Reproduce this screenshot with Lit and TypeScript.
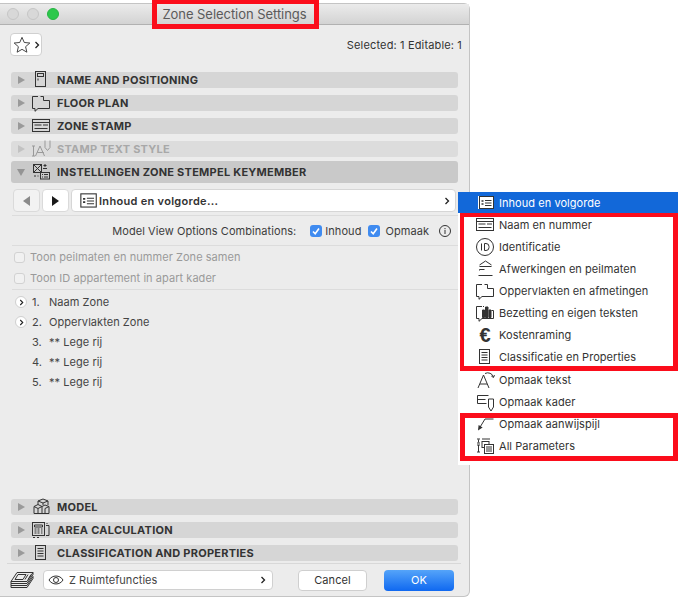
import { LitElement, html, css, svg } from "lit";
import { customElement } from "lit/decorators.js";

const ic: Record<string, any> = {
  door: svg`<rect x="4.500" y="1.500" width="10" height="15"/><rect x="6.500" y="3.500" width="6" height="3"/><path d="M7 8.500v2"/>`,
  floor: svg`<path d="M7 3.500H1.500v12H4v2.800l3-2.800h11.500v-8h-6v-4h-3"/>`,
  stamp: svg`<rect x="1.500" y="3.500" width="17" height="12"/><path d="M1.500 6.500h17M3.500 9h7M12 9h5M3.500 12.500h13"/>`,
  tstyle: svg`<path d="M4.500 17l4.500-10 4.500 10M6.200 13.500h6.600M2.500 7v10M1 7h3M1 17h3M14 1.500v7l2.500 3 2.500-3v-7"/>`,
  key: svg`<rect x="2.500" y="2.500" width="8" height="8"/><path d="M2.500 2.500l8 8M10.500 2.500l-8 8M14 2v3M12.500 3.500h3M12 6.500h4"/><rect x="9.500" y="10.500" width="9" height="6.500"/><path d="M13 12.500h4M13 15h4M11 12.500h1M11 15h1M3 14h2M6.500 14h1"/>`,
  model: svg`<path d="M3 9.500l4-2 4 2v7H3zM3 9.500l4 2 4-2M7 11.500v5M7 7.500V4l5-2 5 2v4M7 4l5 2 5-2M12 6v2M11 9.500l3-1.500 4 1.500v7h-7M14 11.500l4-2M14 11.500v5"/>`,
  area: svg`<rect x="1.500" y="2.500" width="12" height="13"/><path d="M3.500 5h8v2h-8zM3.500 9h2M6.500 9h2M10 9h1.500M3.500 11h2M6.500 11h2M10 11h1.500M3.500 13h2M6.500 13h2M10 13h1.500M15 5.500h3v10h-3M2 17.500h2M6 17.500h2M16 3v1"/>`,
  doc: svg`<rect x="4.500" y="2.500" width="10" height="14"/><path d="M6.500 5.500h6M6.500 8h6M6.500 10.500h6M6.500 13h6"/>`,
  list: svg`<rect x="3.500" y="3.500" width="14" height="12"/><path d="M9 7.500h6.500M9 10h6.500M9 12.500h6.500"/><path d="M5.500 8h2M5.500 11h2" stroke-width="1.500"/>`,
  id: svg`<circle cx="10" cy="10" r="8.500"/><path d="M6.500 6.500v7M9.500 6.500v7h1.500a3 3 0 0 0 3-3v-1a3 3 0 0 0-3-3z"/>`,
  afw: svg`<path d="M4.500 6l6-4 6 4M4.500 7.500h12M4.500 11.500v-1h5M3.500 16.500h14"/>`,
  bez: svg`<path d="M7 3.500H1.500v12H4v2.800l3-2.800h11.500v-8h-2M9 3.500h-1"/><path d="M7.500 7h2v7.500h-2zM10.500 4h2.500v10.500h-2.500zM14 7h2v7.500h-2z" fill="#333"/>`,
  opt: svg`<path d="M3 18l5.500-13 5.500 13M5 14h7M10 3.500a6 6 0 0 1 8.500 3.500M18.500 7.500l-2.200-1.500M18.500 7.500l1-2.400"/>`,
  kader: svg`<path d="M2.500 3.500h11M2.500 3.500v8h9M2.500 7.500h8M13.500 7v8l2.500 4 2.500-4V7z"/>`,
  arrow: svg`<path d="M18.500 5H10L4.500 14"/><path d="M3 16.500l.6-5.500 4 2.400z" fill="#333" stroke="none"/>`,
  all: svg`<path d="M3.500 3.500v3M2 3h3M2 7h3M7 3h8M3.500 9v7M2 9h3M2 16h3"/><rect x="7" y="5.500" width="7" height="6"/><rect x="9.500" y="8.500" width="9" height="9" fill="#fff"/><path d="M11 11h6M11 13h6M11 15h6"/>`,
  star: svg`<path d="M10 1.500l2.500 5.700 6.200.6-4.700 4.100 1.400 6.100-5.400-3.200-5.400 3.200 1.400-6.100L1.300 7.800l6.200-.6z"/>`,
};

const icon = (n: string) => html`<svg class="ic" viewBox="0 0 20 20">${ic[n]}</svg>`;

const head = (name: string, label: string, cls = "") => html`
  <div class="sec ${cls}">
    <span class="tri"></span>
    <span class="sec-ic">${icon(name)}</span>
    <span class="sec-t">${label}</span>
  </div>`;

const menu: [string, string, string?][] = [
  ["stamp", "Naam en nummer"],
  ["id", "Identificatie"],
  ["afw", "Afwerkingen en peilmaten"],
  ["floor", "Oppervlakten en afmetingen"],
  ["bez", "Bezetting en eigen teksten"],
  ["euro", "Kostenraming"],
  ["doc", "Classificatie en Properties"],
  ["opt", "Opmaak tekst", "gap"],
  ["kader", "Opmaak kader"],
  ["arrow", "Opmaak aanwijspijl"],
  ["all", "All Parameters"],
];

const chev = html`<svg class="chev" viewBox="0 0 6 8"><path d="M1.500 1l3 3-3 3"/></svg>`;
const tick = html`<svg viewBox="0 0 12 12"><path d="M3 6.500l2.200 2.300L9 3.500"/></svg>`;

@customElement("app-root")
export class AppRoot extends LitElement {
  static styles = css`
    :host { display: block; position: relative; width: 678px; height: 597px; overflow: hidden; background: #fff;
      font-family: Inter, "Liberation Sans", sans-serif; font-size: 11px; color: #333; }
    * { box-sizing: border-box; }
    .ic { width: 20px; height: 20px; fill: none; stroke: #333; stroke-width: 1; flex: none; overflow: visible; }
    .win { width: 470px; height: 594px; margin-top: 3px; background: #ececec; border: 1px solid #c4c4c4; border-left: none; border-radius: 0 6px 6px 0;
      display: flex; flex-direction: column; }
    .title { height: 21px; flex: none; display: flex; align-items: center; justify-content: center; position: relative;
      background: linear-gradient(#ebebeb, #d3d3d3); border-bottom: 1px solid #b1b1b1; font-size: 13px; color: #5a5a5a; letter-spacing: -.05px; }
    .lights { position: absolute; left: 7px; top: 4px; display: flex; gap: 8px; }
    .light { width: 12px; height: 12px; border-radius: 50%; background: #d8d8d8; border: 1px solid #c6c6c6; }
    .light.g { background: #2cc84b; border-color: #27b443; }
    .tools { display: flex; justify-content: space-between; align-items: center; height: 23px; margin: 8px 7px 0 10px; letter-spacing: .15px; }
    .star { width: 32px; height: 23px; background: #fff; border: 1px solid #d0d0d0; border-radius: 4px; display: flex; align-items: center; padding-left: 2px; gap: 3px; }
    .star .ic { width: 18px; height: 18px; }
    .chev { width: 6px; height: 8px; fill: none; stroke: #222; stroke-width: 1.300; flex: none; }
    .secs { display: flex; flex-direction: column; gap: 7px; margin: 0 11px 0 11px; }
    .secs.top { margin-top: 16px; }
    .sec { height: 16px; background: #d6d6d6; border-radius: 3px; display: flex; align-items: center; font-weight: 700; letter-spacing: .25px; color: #333; }
    .sec.dis { color: #a8a8a8; background: #dcdcdc; }
    .sec.dis .ic { stroke: #999; }
    .sec.open { height: 22px; background: #c9c9c9; margin-top: -3px; }
    .tri { width: 0; height: 0; margin-left: 7px; border-style: solid; border-width: 4px 0 4px 7px; border-color: transparent transparent transparent #9a9a9a; flex: none; }
    .dis .tri { border-left-color: #c2c2c2; }
    .open .tri { border-width: 7px 4px 0 4px; margin-left: 6px; border-color: #949494 transparent transparent transparent; }
    .sec-ic { margin-left: 6px; width: 20px; display: flex; }
    .sec-t { margin-left: 6px; }
    .nav { display: flex; gap: 2px; height: 23px; margin: 6px 13px 0 13px; }
    .nbtn { width: 27px; background: #f2f2f2; border: 1px solid #dadada; border-radius: 4px; display: flex; align-items: center; justify-content: center; }
    .nbtn.on { background: #fff; }
    .nbtn i { width: 0; height: 0; border-style: solid; border-width: 5.500px 7px 5.500px 0; border-color: transparent #8a8a8a transparent transparent; }
    .nbtn.on i { border-width: 5.500px 0 5.500px 7px; border-color: transparent transparent transparent #1a1a1a; }
    .nsel { flex: 1; background: #fff; border: 1px solid #d6d6d6; border-radius: 4px; display: flex; align-items: center; padding: 0 5px 0 5px; font-weight: 600; letter-spacing: .3px; }
    .nsel .ic { width: 22px; height: 22px; }
    .grow { flex: 1; }
    .div { height: 1px; background: #dcdcdc; margin: 0 11px 0 12px; flex: none; }
    .div.first { margin-top: 3px; }
    .mv { height: 29px; display: flex; align-items: center; justify-content: flex-end; padding-right: 18px; color: #3c3c3c; letter-spacing: .06px; }
    .cb { width: 12px; height: 12px; border-radius: 3px; background: #3f8bf0; display: flex; flex: none; }
    .cb svg { width: 12px; height: 12px; fill: none; stroke: #fff; stroke-width: 1.600; }
    .mv .cb { margin: 0 3px 0 14px; }
    .mv .cb.b { margin-left: 7px; margin-right: 5px; }
    .info { width: 12px; height: 12px; margin-left: 10px; fill: none; stroke: #333; }
    .opts { padding: 2px 0 0 14px; height: 43px; display: flex; flex-direction: column; gap: 3px; color: #9a9a9a; letter-spacing: .05px; flex: none; }
    .opt { height: 18px; display: flex; align-items: center; gap: 5px; }
    .ob { width: 11px; height: 11px; background: #f1f1f1; border: 1px solid #d2d2d2; border-radius: 3px; }
    .rows { display: flex; flex-direction: column; padding: 2px 0 0 15px; color: #444; letter-spacing: .05px; }
    .r { height: 20px; display: flex; align-items: center; }
    .rb { width: 12px; height: 12px; border-radius: 50%; background: #fff; border: 1px solid #cfcfcf; display: flex; align-items: center; justify-content: center; flex: none; }
    .rb .chev { width: 5px; height: 7px; }
    .num { margin-left: 17px; width: 17px; }
    .num.b { margin-left: 5px; }
    .foot { height: 33px; margin: 2px 8px 0 7px; border-top: 1px solid #d8d8d8; display: flex; align-items: center; flex: none; }
    .layers { width: 26px; height: 18px; margin-left: 2px; fill: none; stroke: #333; stroke-width: 1; flex: none; }
    .fsel { width: 230px; height: 20px; margin-left: 8px; background: #fff; border: 1px solid #d0d0d0; border-radius: 4px; display: flex; align-items: center; padding: 0 6px 0 3px; color: #444; letter-spacing: .05px; flex: none; }
    .eye { width: 16px; height: 10px; margin: 0 5px 0 1px; fill: none; stroke: #333; flex: none; }
    .btn { width: 69px; height: 21px; border-radius: 4px; background: #fff; border: 1px solid #cfcfcf; display: flex; align-items: center; justify-content: center; letter-spacing: .1px; margin-left: 25px; flex: none; }
    .btn.ok { width: 70px; margin-left: 17px; background: linear-gradient(#55a4f9, #0f68f0); border: none; color: #fff; }
    .menu { position: absolute; left: 458px; top: 192px; width: 220px; background: #fff; display: flex; flex-direction: column; color: #333; letter-spacing: .05px; padding-bottom: 8px; }
    .m { height: 22px; display: flex; align-items: center; padding-left: 17px; }
    .m:nth-child(2) { margin-top: 1px; }
    .m.gap { margin-top: 1px; }
    .m.sel { height: 21px; background: #1268d9; color: #fff; padding-left: 20px; }
    .mi { width: 20px; height: 20px; flex: none; margin-right: 4px; display: flex; align-items: center; justify-content: center; }
    .m.sel .mi { width: 15px; height: 13px; margin-right: 6px; background: #fff; }
    .euro { font: 700 20px "Liberation Sans", sans-serif; color: #333; }
    .red { position: absolute; border: 4px solid #fb0d1b; pointer-events: none; }
    .r1 { left: 152px; top: 0; width: 167px; height: 29px; border-width: 4px 5px 5px 5px; }
    .r2 { left: 460px; top: 213px; width: 218px; height: 158px; border-width: 4px 5px 5px 4px; }
    .r3 { left: 460px; top: 413px; width: 218px; height: 48px; border-width: 5px; }
  `;

  render() {
    return html`
      <div class="win">
        <div class="title">
          <div class="lights"><span class="light"></span><span class="light"></span><span class="light g"></span></div>
          Zone Selection Settings
        </div>
        <div class="tools">
          <div class="star">${icon("star")}${chev}</div>
          <span>Selected: 1 Editable: 1</span>
        </div>
        <div class="secs top">
          ${head("door", "NAME AND POSITIONING")}
          ${head("floor", "FLOOR PLAN")}
          ${head("stamp", "ZONE STAMP")}
          ${head("tstyle", "STAMP TEXT STYLE", "dis")}
          ${head("key", "INSTELLINGEN ZONE STEMPEL KEYMEMBER", "open")}
        </div>
        <div class="nav">
          <div class="nbtn"><i></i></div>
          <div class="nbtn on"><i></i></div>
          <div class="nsel">${icon("list")}<span>Inhoud en volgorde...</span><span class="grow"></span>${chev}</div>
        </div>
        <div class="div first"></div>
        <div class="mv">
          <span>Model View Options Combinations:</span>
          <span class="cb">${tick}</span><span>Inhoud</span>
          <span class="cb b">${tick}</span><span>Opmaak</span>
          <svg class="info" viewBox="0 0 12 12"><circle cx="6" cy="6" r="5.500"/><path d="M6 5v4M6 3v1.200"/></svg>
        </div>
        <div class="div"></div>
        <div class="opts">
          <div class="opt"><span class="ob"></span>Toon peilmaten en nummer Zone samen</div>
          <div class="opt"><span class="ob"></span>Toon ID appartement in apart kader</div>
        </div>
        <div class="div"></div>
        <div class="rows">
          <div class="r"><span class="rb">${chev}</span><span class="num b">1.</span><span>Naam Zone</span></div>
          <div class="r"><span class="rb">${chev}</span><span class="num b">2.</span><span>Oppervlakten Zone</span></div>
          <div class="r"><span class="num">3.</span><span>** Lege rij</span></div>
          <div class="r"><span class="num">4.</span><span>** Lege rij</span></div>
          <div class="r"><span class="num">5.</span><span>** Lege rij</span></div>
        </div>
        <div class="grow"></div>
        <div class="secs">
          ${head("model", "MODEL")}
          ${head("area", "AREA CALCULATION")}
          ${head("doc", "CLASSIFICATION AND PROPERTIES")}
        </div>
        <div class="foot">
          <svg class="layers" viewBox="0 0 26 18"><path d="M8 1.500h16l-6 9H2zM2 10.500v2h16l6-9v-2M2 12.500v2h16l6-9M2 14.500v2h16l6-9v-2M6 8.500l3-5h8l-3 5zM19 3.500l-3 5M22 3.500l-3 5"/></svg>
          <div class="fsel">
            <svg class="eye" viewBox="0 0 16 10"><path d="M1 5c3-5.300 11-5.300 14 0-3 5.300-11 5.300-14 0z"/><circle cx="8" cy="5" r="2.500"/></svg>
            <span>Z Ruimtefuncties</span><span class="grow"></span>${chev}
          </div>
          <div class="btn">Cancel</div>
          <div class="btn ok">OK</div>
        </div>
      </div>
      <div class="menu">
        <div class="m sel"><span class="mi">${icon("list")}</span><span>Inhoud en volgorde</span></div>
        ${menu.map(([i, t, c]) => html`<div class="m ${c ?? ""}"><span class="mi">${i === "euro" ? html`<span class="euro">€</span>` : icon(i)}</span><span>${t}</span></div>`)}
      </div>
      <div class="red r1"></div>
      <div class="red r2"></div>
      <div class="red r3"></div>
    `;
  }
}
